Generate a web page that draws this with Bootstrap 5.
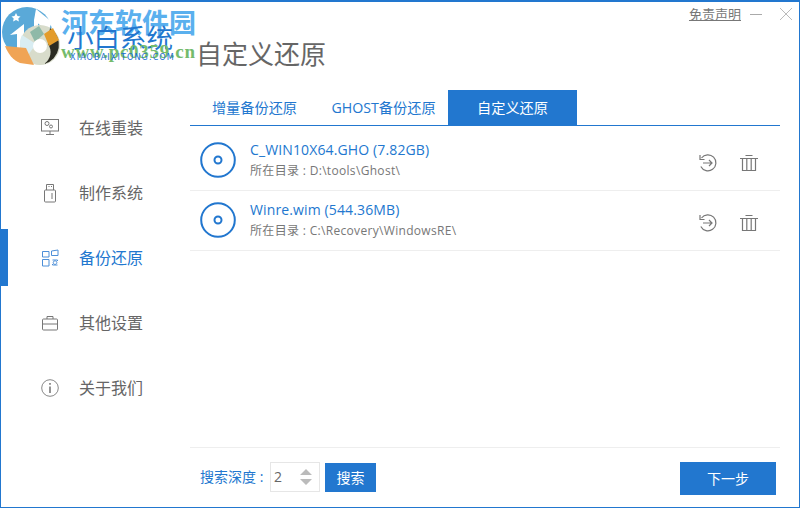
<!DOCTYPE html>
<html lang="zh">
<head>
<meta charset="utf-8">
<title>小白系统</title>
<link href="https://cdn.jsdelivr.net/npm/bootstrap@5.3.0/dist/css/bootstrap.min.css" rel="stylesheet">
<style>
html,body{width:800px;height:508px;overflow:hidden;margin:0;background:#fff}
body{font-family:"Open Sans","Noto Sans CJK SC",sans-serif;font-size:14px;color:#666}
.win{width:800px;height:508px;border:1px solid #2277cf;border-top-width:2px;position:relative;background:#fff}
.topzone{height:88px;padding-left:195px;padding-top:32px}
.pagetitle{font-size:26px;line-height:40px;color:#666;font-weight:400;margin:0}
.winctl{position:absolute;top:4px;right:7px;color:#888}
.winctl a{font-size:13px;color:#777;text-decoration:underline;line-height:16px;margin-right:9px}
.winctl svg+svg{margin-left:18px}
.mainzone{height:416px}
.sidecol{width:189px;flex:none;padding-top:5px}
.sideitem{height:65px;padding-left:39px;gap:19px;color:#666;font-size:16px;position:relative}
.sideitem.on{color:#2277cf}
.sideitem.on::before{content:"";position:absolute;left:0;top:4px;height:57px;width:7px;background:#2277cf}
.sideitem svg{width:20px;height:20px;flex:none}
.content{width:590px;flex:none}
.tabbar{height:36px;border-bottom:1px solid #2277cf;margin:0}
.tabbar .tb{display:block;width:129px;height:35px;line-height:35px;font-size:14.200px;color:#2277cf;text-decoration:none;text-align:center}
.tabbar .tb.cur{background:#2277cf;color:#fff}
.filerow{height:60px;border-bottom:1px solid #eee;padding-left:10px;padding-right:21px}
.filerow.first{height:65px;padding-top:5px}
.discico{width:36px;height:36px;flex:none;margin-right:14px;margin-bottom:2px}
.infoblk{padding-bottom:2px}
.fname{font-size:14px;line-height:20px;color:#2277cf;letter-spacing:.13px;margin-bottom:2px}
.fpath{font-size:12px;line-height:18px;color:#777;letter-spacing:.32px}
.acts{gap:20px;margin-top:5px}
.acts svg{width:22px;height:22px}
.spacer{flex:1}
.footzone{height:59px;border-top:1px solid #eee;padding:14px 4px 0 10px}
.lbl{color:#2277cf;font-size:14px;line-height:30px;width:70px;white-space:nowrap}
.spinbox{width:50px;height:30px;border:1px solid #e6e6e6;padding:0 6px 0 3px;line-height:28px;font-size:14px;color:#666;margin-right:5px}
.spinbox svg{width:14px;height:20px}
.btnblue,.btnblue:hover{background:#2277cf;color:#fff;border:0;border-radius:0;padding:0;font-size:14px}
.bs{width:51px;height:29px;margin-top:1px}
.bn{width:96px;height:33px}
.logo{position:absolute;left:-1px;top:-2px;width:70px;height:70px}
.wm1{position:absolute;left:60px;top:6px;font-family:"Liberation Serif","Noto Sans CJK SC",serif;font-weight:700;font-size:27px;line-height:32px;color:#5ab0ee}
.wm2{position:absolute;left:60px;top:39px;font-family:"Liberation Serif",serif;font-weight:700;font-size:19px;line-height:22px;color:#74bb6c;letter-spacing:.7px}
.brand{position:absolute;left:66px;top:21px;font-size:26.500px;line-height:30px;color:#2277cf}
.brandsub{position:absolute;left:69px;top:51px;font-family:"DejaVu Sans",sans-serif;font-size:8px;line-height:10px;letter-spacing:1.150px;color:#1b6fd0}
</style>
</head>
<body>
<div class="win">
  <div class="topzone"><h1 class="pagetitle">自定义还原</h1></div>
  <svg class="logo" viewBox="0 0 70 70">
    <circle cx="27" cy="32" r="25" fill="#5aa9d8"/>
    <path d="M36 9 52 22 48 32 34 20z" fill="#fff"/>
    <path d="M10 35 24 24V48H17V34z" fill="#fff"/>
    <path d="M34 20h4v16h-4z" fill="#fff"/>
    <circle cx="40" cy="45" r="20" fill="#d8dccb"/>
    <path d="M50 28a20 20 0 0 1-6 36 14 14 0 0 0 4-20z" fill="#2b2b22"/>
    <path d="M22 35 36 44 26 58a20 20 0 0 1-4-23z" fill="#d9edf2"/>
    <path d="M44 34l9-6 6 12-10 6z" fill="#e39c2b"/>
    <path d="M5 46 26 48 34 65 20 63C13 60 8 54 5 46z" fill="#f0a455"/>
    <path d="M30 32l9-6 5 8-9 8z" fill="#8fb9a8"/>
    <circle cx="40" cy="46" r="7" fill="#fff"/>
    <path d="M16 13l1.500 3 3 .4-2.200 2 .6 3-2.900-1.500-2.900 1.500.6-3-2.200-2 3-.4z" fill="#fff"/>
  </svg>
  <div class="wm1">河东软件园</div>
  <div class="brand">小白系统</div>
  <div class="wm2">www.pc0359.cn</div>
  <div class="brandsub">XIAOBAIXITONG.COM</div>
  <div class="winctl d-flex align-items-center">
    <a href="#">免责声明</a>
    <svg width="12" height="16" viewBox="0 0 12 16"><path d="M0 8.500H12" stroke="#aaa" fill="none"/></svg>
    <svg width="12" height="16" viewBox="0 0 12 16"><path d="M0 2L12 14M12 2L0 14" stroke="#bbb" fill="none"/></svg>
  </div>
  <div class="mainzone d-flex">
    <nav class="sidecol">
      <div class="sideitem d-flex align-items-center">
        <svg viewBox="0 0 20 20" fill="none" stroke="#777"><rect x="1.500" y="1.500" width="17" height="11.500"/><circle cx="7" cy="5.500" r="2"/><circle cx="11" cy="8.500" r="1.500"/><path d="M10 13v3M6 16.500h8"/></svg>
        <span>在线重装</span>
      </div>
      <div class="sideitem d-flex align-items-center">
        <svg viewBox="0 0 20 20" fill="none" stroke="#777"><path d="M6.500 7V1.500h7V7"/><rect x="4.500" y="7" width="11" height="12" rx="1"/><path d="M8.500 3.500h1M11 3.500h1M12 10v6"/></svg>
        <span>制作系统</span>
      </div>
      <div class="sideitem on d-flex align-items-center">
        <svg viewBox="0 0 20 20" fill="none" stroke="#4d8fd8"><path d="M2.500 3.500H9V9H2.500zM11.500 3 18 2v5.500h-6.500zM2.500 11.500H9V18H2.500z"/><path d="M12.500 12h5v1M17.500 17h-5v-1"/><path d="M15 12.800a1.800 1.800 0 1 0 .1 0"/></svg>
        <span>备份还原</span>
      </div>
      <div class="sideitem d-flex align-items-center">
        <svg viewBox="0 0 20 20" fill="none" stroke="#777"><rect x="2.500" y="6" width="15" height="11" rx="1"/><path d="M7 6V3.500h6V6M2.500 11h15"/></svg>
        <span>其他设置</span>
      </div>
      <div class="sideitem d-flex align-items-center">
        <svg viewBox="0 0 20 20" fill="none" stroke="#888"><circle cx="10" cy="10" r="8.300"/><path d="M10 8.500V15" stroke-width="1.800"/><path d="M10 5v1.800" stroke-width="1.800"/></svg>
        <span>关于我们</span>
      </div>
    </nav>
    <main class="content d-flex flex-column">
      <div class="tabbar d-flex">
        <a class="tb" href="#">增量备份还原</a>
        <a class="tb" href="#">GHOST备份还原</a>
        <a class="tb cur" href="#">自定义还原</a>
      </div>
      <div class="filerow first d-flex align-items-center">
        <svg class="discico" viewBox="0 0 36 36" fill="none" stroke="#2277cf"><circle cx="18" cy="18" r="16.800" stroke-width="2"/><circle cx="18" cy="18" r="3.500" stroke-width="2"/></svg>
        <div class="infoblk"><div class="fname">C_WIN10X64.GHO (7.82GB)</div><div class="fpath">所在目录 : D:\tools\Ghost\</div></div>
        <div class="spacer"></div>
        <div class="acts d-flex">
          <svg viewBox="0 0 22 22" fill="none" stroke="#777" stroke-width="1.200"><path d="M6.500 6A8 8 0 1 1 5.800 14.500"/><path d="M5 3V7.500H9.500"/><path d="M8 11h9M14 8l3 3-3 3"/></svg>
          <svg viewBox="0 0 22 22" fill="none" stroke="#777" stroke-width="1.200"><path d="M3 6.500H21M8.500 3.500h7M5.500 6.500V18.500H18.500V6.500M9.800 6.500V18.500M14.200 6.500V18.500"/></svg>
        </div>
      </div>
      <div class="filerow d-flex align-items-center">
        <svg class="discico" viewBox="0 0 36 36" fill="none" stroke="#2277cf"><circle cx="18" cy="18" r="16.800" stroke-width="2"/><circle cx="18" cy="18" r="3.500" stroke-width="2"/></svg>
        <div class="infoblk"><div class="fname">Winre.wim (544.36MB)</div><div class="fpath">所在目录 : C:\Recovery\WindowsRE\</div></div>
        <div class="spacer"></div>
        <div class="acts d-flex">
          <svg viewBox="0 0 22 22" fill="none" stroke="#777" stroke-width="1.200"><path d="M6.500 6A8 8 0 1 1 5.800 14.500"/><path d="M5 3V7.500H9.500"/><path d="M8 11h9M14 8l3 3-3 3"/></svg>
          <svg viewBox="0 0 22 22" fill="none" stroke="#777" stroke-width="1.200"><path d="M3 6.500H21M8.500 3.500h7M5.500 6.500V18.500H18.500V6.500M9.800 6.500V18.500M14.200 6.500V18.500"/></svg>
        </div>
      </div>
      <div class="spacer"></div>
      <div class="footzone d-flex align-items-start">
        <span class="lbl">搜索深度 :</span>
        <div class="spinbox d-flex align-items-center justify-content-between">
          <span>2</span>
          <svg viewBox="0 0 14 20" fill="#bbb"><path d="M7 2 13 8H1zM1 12H13L7 18z"/></svg>
        </div>
        <button class="btn btnblue bs" type="button">搜索</button>
        <div class="spacer"></div>
        <button class="btn btnblue bn" type="button">下一步</button>
      </div>
    </main>
  </div>
</div>
<script src="https://cdn.jsdelivr.net/npm/bootstrap@5.3.0/dist/js/bootstrap.bundle.min.js"></script>
</body>
</html>
